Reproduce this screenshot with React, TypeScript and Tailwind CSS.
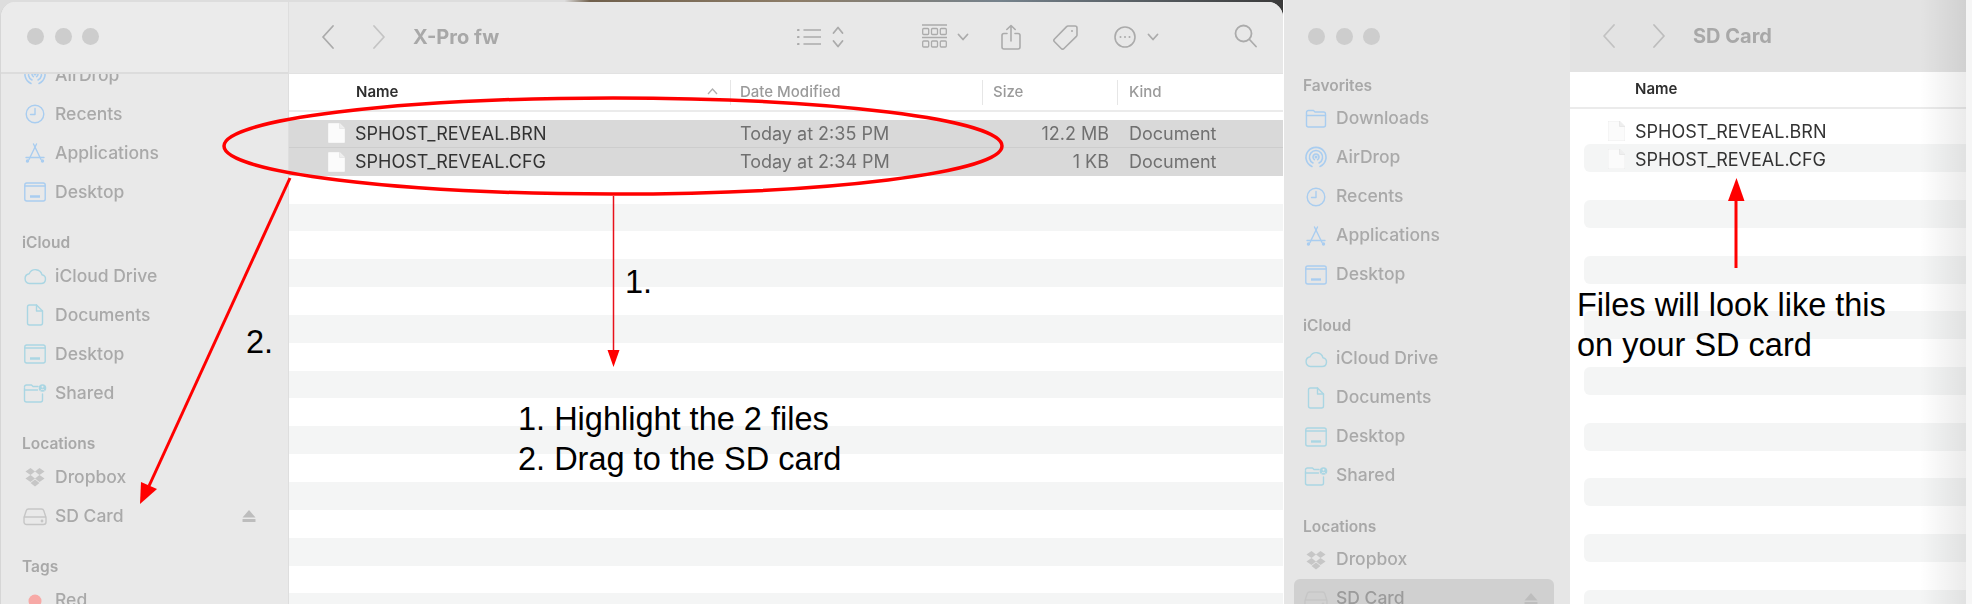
import React from 'react';

type IconName =
  | 'folder' | 'airdrop' | 'clock' | 'apps' | 'desktop'
  | 'cloud' | 'doc' | 'shared' | 'dropbox' | 'drive' | 'dot';

const BLUE = '#a9cdf0';
const TEAL = '#aad6e3';
const GRAY = '#c6c6c6';

const SideIcon = ({ name, color }: { name: IconName; color: string }) => {
  const common = { fill: 'none', stroke: color, strokeWidth: 1.4, strokeLinecap: 'round' as const, strokeLinejoin: 'round' as const };
  return (
    <svg width="24" height="24" viewBox="0 0 24 24" {...common}>
      {name === 'folder' && (
        <>
          <path d="M2.5 7V18a2 2 0 0 0 2 2h15a2 2 0 0 0 2-2V7a2 2 0 0 0-2-2H11L9.5 3.5h-5a2 2 0 0 0-2 2Z" />
          <path d="M2.5 8.5h19" />
        </>
      )}
      {name === 'airdrop' && (
        <>
          <path d="M8 20.5a10 10 0 1 1 8 0" strokeWidth="1.6" />
          <path d="M9 17a6.6 6.6 0 1 1 6 0" strokeWidth="1.6" />
          <path d="M10.4 13.6a3 3 0 1 1 3.2 0" strokeWidth="1.6" />
          <circle cx="12" cy="11" r="0.8" fill={color} />
        </>
      )}
      {name === 'clock' && (
        <>
          <circle cx="12" cy="12" r="8.8" />
          <path d="M12 6.5V12.5H7.5" />
        </>
      )}
      {name === 'apps' && (
        <>
          <path d="M13.5 3 6 18.5" />
          <path d="M10.5 3 18 18.5" />
          <path d="M3 16.5h18" />
          <circle cx="4.5" cy="20" r="1" fill={color} />
          <circle cx="19.5" cy="20" r="1" fill={color} />
        </>
      )}
      {name === 'desktop' && (
        <>
          <rect x="1.8" y="3" width="20.4" height="18" rx="2" />
          <path d="M2 6h20" />
          <path d="M7 16.5h10" strokeWidth="2.4" strokeLinecap="butt" />
        </>
      )}
      {name === 'cloud' && (
        <path d="M6.5 19.5H18a4.4 4.4 0 0 0 1-8.7A6.8 6.8 0 0 0 6.2 9.7a4.95 4.95 0 0 0 .3 9.8Z" />
      )}
      {name === 'doc' && (
        <>
          <path d="M6.5 2h7l6 6v12a2 2 0 0 1-2 2h-11a2 2 0 0 1-2-2V4a2 2 0 0 1 2-2Z" />
          <path d="M13.5 2v6h6" />
        </>
      )}
      {name === 'shared' && (
        <>
          <path d="M1.5 7v12a2 2 0 0 0 2 2h14a2 2 0 0 0 2-2v-6" />
          <path d="M15 5.5h-5L8.5 4h-5a2 2 0 0 0-2 2" />
          <path d="M1.5 9h13" />
          <circle cx="19.5" cy="7" r="3.8" fill={color} stroke="none" />
          <circle cx="19.5" cy="5.8" r="1" fill="#e9e9e9" stroke="none" />
          <path d="M17.8 9c.4-1 3-1 3.4 0" stroke="#e9e9e9" strokeWidth="1" />
        </>
      )}
      {name === 'dropbox' && (
        <g fill={color} stroke="none">
          <path d="M7.5 3l-5 3.5 5 3.5L12 6.5Z" />
          <path d="M16.5 3L12 6.5l4.5 3.5 5-3.5Z" />
          <path d="M2.5 13.5l5-3.5 4.5 3.5L7.5 17Z" />
          <path d="M21.5 13.5l-5-3.5-4.500 3.5 4.500 3.5Z" />
          <path d="M7.5 18l4.500-3.5 4.500 3.5-4.500 3.5Z" />
        </g>
      )}
      {name === 'drive' && (
        <>
          <path d="M5.5 5h13a2.5 2.5 0 0 1 2.3 1.7L23 13.5V18a2.5 2.5 0 0 1-2.5 2.5h-17A2.5 2.5 0 0 1 1 18v-4.5L3.200 6.700A2.500 2.500 0 0 1 5.500 5Z" />
          <path d="M1.5 13h21" />
          <circle cx="19" cy="17" r="0.7" fill={color} />
        </>
      )}
      {name === 'dot' && <circle cx="12" cy="13" r="6.5" fill="#f7a9a6" stroke="none" />}
    </svg>
  );
};

const Eject = () => (
  <svg width="14" height="14" viewBox="0 0 14 14" fill="#bdbdbd">
    <path d="M7 1l6.5 7.5H.5Z" />
    <rect x="0.5" y="10" width="13" height="3" rx="0.5" />
  </svg>
);

type Item = { label: string; icon: IconName; color: string; eject?: boolean; active?: boolean };
type Section = { title?: string; items: Item[] };

const Sidebar = ({ sections }: { sections: Section[] }) => (
  <div className="flex flex-col">
    {sections.map((s, idx) => (
      <div key={idx} className="mb-[18px] flex flex-col">
        {s.title && (
          <div className="flex h-[27px] items-center pl-[9px] text-[15.5px] font-semibold text-[#a8a8a8]">{s.title}</div>
        )}
        {s.items.map((it) => (
          <div
            key={it.label}
            className={`flex h-[39px] items-center rounded-md pl-[10px] pr-[16px] ${it.active ? 'bg-[#d0d0d0] text-[#9b9b9b]' : 'text-[#a9a9a9]'}`}
          >
            <SideIcon name={it.icon} color={it.color} />
            <span className="ml-[8px] text-[17.5px] font-medium">{it.label}</span>
            {it.eject && <span className="ml-auto flex"><Eject /></span>}
          </div>
        ))}
      </div>
    ))}
  </div>
);

const quickItems: Item[] = [
  { label: 'AirDrop', icon: 'airdrop', color: BLUE },
  { label: 'Recents', icon: 'clock', color: BLUE },
  { label: 'Applications', icon: 'apps', color: BLUE },
  { label: 'Desktop', icon: 'desktop', color: BLUE },
];

const icloud: Section = {
  title: 'iCloud',
  items: [
    { label: 'iCloud Drive', icon: 'cloud', color: TEAL },
    { label: 'Documents', icon: 'doc', color: TEAL },
    { label: 'Desktop', icon: 'desktop', color: TEAL },
    { label: 'Shared', icon: 'shared', color: TEAL },
  ],
};

const locations = (active: boolean): Section => ({
  title: 'Locations',
  items: [
    { label: 'Dropbox', icon: 'dropbox', color: GRAY },
    { label: 'SD Card', icon: 'drive', color: GRAY, eject: true, active },
  ],
});

const tags: Section = { title: 'Tags', items: [{ label: 'Red', icon: 'dot', color: '#f7a9a6' }] };

const Traffic = () => (
  <div className="flex gap-[10.5px]">
    <span className="h-[17px] w-[17px] rounded-full bg-[#cdcdcd]" />
    <span className="h-[17px] w-[17px] rounded-full bg-[#cdcdcd]" />
    <span className="h-[17px] w-[17px] rounded-full bg-[#cdcdcd]" />
  </div>
);

const Chevron = ({ dir, color }: { dir: 'left' | 'right'; color: string }) => (
  <svg width="16" height="26" viewBox="0 0 16 26" fill="none" stroke={color} strokeWidth="1.8" strokeLinecap="round" strokeLinejoin="round">
    <path d={dir === 'left' ? 'M13 2 3 13l10 11' : 'M3 2l10 11L3 24'} />
  </svg>
);

const Down = ({ className }: { className: string }) => (
  <svg className={className} width="12" height="8" viewBox="0 0 12 8" fill="none" stroke="#ababab" strokeWidth="1.8" strokeLinecap="round" strokeLinejoin="round">
    <path d="M1.5 1.5 6 6.5l4.5-5" />
  </svg>
);

const ToolIcons = () => (
  <div className="flex items-center pr-[26px]">
    <svg width="24" height="18" viewBox="0 0 24 18" fill="none" stroke="#ababab" strokeWidth="1.5" strokeLinecap="round">
      <path d="M7 2h17M7 9h17M7 16h17" />
      <path d="M1 2h.6M1 9h.6M1 16h.6" strokeWidth="2.2" />
    </svg>
    <svg className="ml-[11px]" width="12" height="24" viewBox="0 0 12 24" fill="none" stroke="#ababab" strokeWidth="1.8" strokeLinecap="round" strokeLinejoin="round">
      <path d="M1.5 8 6 2.5 10.5 8M1.5 16 6 21.5 10.5 16" />
    </svg>
    <svg className="ml-[78px]" width="25" height="25" viewBox="0 0 25 25" fill="none" stroke="#ababab" strokeWidth="1.3">
      <path d="M0 1h25M0 13.5h25" strokeWidth="1.5" />
      <rect x="0.7" y="4.5" width="6" height="6" rx="1" />
      <rect x="9.5" y="4.5" width="6" height="6" rx="1" />
      <rect x="18.3" y="4.5" width="6" height="6" rx="1" />
      <rect x="0.7" y="17" width="6" height="6" rx="1" />
      <rect x="9.5" y="17" width="6" height="6" rx="1" />
      <rect x="18.3" y="17" width="6" height="6" rx="1" />
    </svg>
    <Down className="ml-[10px]" />
    <svg className="ml-[32px]" width="20" height="26" viewBox="0 0 20 26" fill="none" stroke="#ababab" strokeWidth="1.6" strokeLinecap="round" strokeLinejoin="round">
      <path d="M6 9.5H3a2 2 0 0 0-2 2V23a2 2 0 0 0 2 2h14a2 2 0 0 0 2-2V11.5a2 2 0 0 0-2-2h-3" />
      <path d="M10 17V1.5M5.8 5.5 10 1.5l4.2 4" />
    </svg>
    <svg className="ml-[32px]" width="26" height="26" viewBox="0 0 26 26" fill="none" stroke="#ababab" strokeWidth="1.6" strokeLinejoin="round">
      <path d="M15 2h7a2 2 0 0 1 2 2v7a2 2 0 0 1-.6 1.4L11 24.5a2 2 0 0 1-2.8 0l-6.700-6.700a2 2 0 0 1 0-2.800L13.600 2.600A2 2 0 0 1 15 2Z" />
      <circle cx="19" cy="7" r="1" fill="#ababab" stroke="none" />
    </svg>
    <svg className="ml-[35px]" width="22" height="22" viewBox="0 0 22 22" fill="none" stroke="#ababab" strokeWidth="1.6">
      <circle cx="11" cy="11" r="10" />
      <circle cx="6.5" cy="11" r="1" fill="#ababab" stroke="none" />
      <circle cx="11" cy="11" r="1" fill="#ababab" stroke="none" />
      <circle cx="15.5" cy="11" r="1" fill="#ababab" stroke="none" />
    </svg>
    <Down className="ml-[11px]" />
    <svg className="ml-[75px] -mt-[2px]" width="23" height="24" viewBox="0 0 23 24" fill="none" stroke="#ababab" strokeWidth="1.8" strokeLinecap="round">
      <circle cx="9.5" cy="9.5" r="8" />
      <path d="M15.5 15.5 22 22.5" />
    </svg>
  </div>
);

const FileIcon = () => (
  <svg className="shrink-0" width="17" height="20" viewBox="0 0 17 20">
    <path d="M1 0h10.5L17 5.5V19a1 1 0 0 1-1 1H1a1 1 0 0 1-1-1V1a1 1 0 0 1 1-1Z" fill="#fbfbfb" stroke="#e2e2e2" strokeWidth="0.5" />
    <path d="M11.5 0v5.5H17" fill="#eeeeee" stroke="#dddddd" strokeWidth="0.5" />
  </svg>
);

const ROWS = Array.from({ length: 18 }, (_, i) => i);

const files = [
  { name: 'SPHOST_REVEAL.BRN', date: 'Today at 2:35 PM', size: '12.2 MB' },
  { name: 'SPHOST_REVEAL.CFG', date: 'Today at 2:34 PM', size: '1 KB' },
];

const XProWindow = () => (
  <div className="flex h-[604px] w-[1283px] shrink-0 flex-col bg-[linear-gradient(90deg,#dddddd_0%,#dddddd_44%,#70604c_46%,#8d7d68_62%,#75828c_78%,#3a3a3a_100%)] pt-[2px]">
    <div className="flex min-h-0 flex-1 overflow-hidden rounded-t-[15px] border-l border-[#d6d6d6] blur-[0.5px]">
      {/* sidebar is scrolled, AirDrop sits half under the title bar */}
      <div className="flex w-[288px] shrink-0 flex-col overflow-hidden border-r border-[#dedede] bg-[#e9e9e9]">
        <div className="z-10 flex h-[72px] shrink-0 items-center border-b-2 border-[#dcdcdc] bg-[#ebebeb] pb-[2px] pl-[26px]">
          <Traffic />
        </div>
        <div className="ml-[12px] mr-[16px] -mt-[18.5px]">
          <Sidebar sections={[{ items: quickItems }, icloud, locations(false), tags]} />
        </div>
      </div>
      <div className="flex min-w-0 flex-1 flex-col bg-white">
        <div className="flex h-[72px] shrink-0 items-center border-b border-[#e2e2e2] bg-[#e8e8e8] pb-[2px] pl-[31px]">
          <Chevron dir="left" color="#ababab" />
          <span className="ml-[35px] flex"><Chevron dir="right" color="#c4c4c4" /></span>
          <span className="ml-[26px] flex-1 text-[20px] font-bold text-[#a8a8a8]">X-Pro fw</span>
          <ToolIcons />
        </div>
        <div className="flex h-[38px] shrink-0 items-center border-b-2 border-[#ebebeb] text-[15px]">
          <div className="relative w-[441px] pl-[67px] font-semibold text-[#2e2e2e]">
            Name
            <svg className="absolute right-[12px] top-[7px]" width="11" height="7" viewBox="0 0 11 7" fill="none" stroke="#b0b0b0" strokeWidth="1.3"><path d="M1 6 5.5 1 10 6" /></svg>
          </div>
          <div className="flex h-[25px] w-[252px] items-center border-l border-[#e6e6e6] pl-[9px] font-medium text-[#9a9a9a]">Date Modified</div>
          <div className="flex h-[25px] w-[135px] items-center border-l border-[#e6e6e6] pl-[10px] font-medium text-[#9a9a9a]">Size</div>
          <div className="flex h-[25px] items-center border-l border-[#e6e6e6] pl-[11px] font-medium text-[#9a9a9a]">Kind</div>
        </div>
        <div className="mt-[8px] flex flex-col">
          {ROWS.map((i) => {
            const f = files[i];
            if (f) {
              return (
                <div key={i} className={`flex h-[27.85px] shrink-0 items-center bg-[#d9d9d9] text-[18px] ${i === 0 ? 'border-b border-[#cdcdcd]' : ''}`}>
                  <div className="flex w-[441px] items-center gap-[10px] pl-[39px] text-[#333333]">
                    <FileIcon />
                    {f.name}
                  </div>
                  <div className="w-[252px] pl-[10px] text-[#707070]">{f.date}</div>
                  <div className="w-[135px] pr-[8px] text-right text-[#707070]">{f.size}</div>
                  <div className="pl-[12px] text-[#707070]">Document</div>
                </div>
              );
            }
            return <div key={i} className={`h-[27.85px] shrink-0 ${i % 2 === 1 ? 'bg-[#f4f5f5]' : 'bg-white'}`} />;
          })}
        </div>
      </div>
    </div>
  </div>
);

const SdWindow = () => (
  <div className="relative flex h-[604px] w-[682px] shrink-0 overflow-hidden blur-[0.5px]">
    <div className="flex w-[286px] shrink-0 flex-col overflow-hidden bg-[#e6e6e6]">
      <div className="flex h-[72px] shrink-0 items-center pl-[24px]">
        <Traffic />
      </div>
      <div className="ml-[10px] mr-[16px]">
        <Sidebar
          sections={[
            { title: 'Favorites', items: [{ label: 'Downloads', icon: 'folder', color: BLUE }, ...quickItems] },
            icloud,
            locations(true),
          ]}
        />
      </div>
    </div>
    <div className="flex min-w-0 flex-1 flex-col bg-white">
      <div className="flex h-[72px] shrink-0 items-center bg-[#e3e3e3] pl-[31px]">
        <Chevron dir="left" color="#c2c2c2" />
        <span className="ml-[34px] flex"><Chevron dir="right" color="#bdbdbd" /></span>
        <span className="ml-[26px] text-[20px] font-bold text-[#a8a8a8]">SD Card</span>
      </div>
      <div className="flex h-[37px] shrink-0 items-center border-b-2 border-[#ebebeb] pl-[65px] text-[15px] font-semibold text-[#2e2e2e]">Name</div>
      <div className="ml-[14px] mt-[7.5px] flex flex-col">
        {ROWS.map((i) => {
          const name = files[i]?.name;
          return (
            <div key={i} className={`flex h-[27.85px] shrink-0 items-center gap-[10px] rounded-l-md pl-[24px] pt-[2px] text-[18px] text-[#333333] ${i % 2 === 1 ? 'bg-[#f4f5f5]' : 'bg-white'}`}>
              {name && <FileIcon />}
              {name}
            </div>
          );
        })}
      </div>
    </div>
    <div className="absolute inset-y-0 right-0 w-[46px] bg-gradient-to-r from-transparent to-black/[0.08]" />
  </div>
);

export default function App() {
  return (
    <div className="relative flex h-[604px] w-[1972px] overflow-hidden bg-white font-['Inter','Liberation_Sans',sans-serif]">
      <XProWindow />
      <div className="w-px shrink-0 bg-white" />
      <SdWindow />
      <div className="w-[6px] shrink-0 bg-[#f6f6f6]" />

      {/* red annotations over both windows */}
      <svg className="absolute left-0 top-0" width="1972" height="604" viewBox="0 0 1972 604" fill="none">
        <ellipse cx="613" cy="146" rx="389" ry="48" stroke="#ff0000" strokeWidth="3.5" />
        <path d="M613.5 196V352" stroke="#e8101a" strokeWidth="1.5" />
        <path d="M607.5 350h12l-6 17Z" fill="#ff0000" />
        <path d="M290 178 149 486" stroke="#ff0000" strokeWidth="3" />
        <path d="M141 482l16 7-17 15Z" fill="#ff0000" />
        <path d="M1736 200V268" stroke="#ff0000" strokeWidth="3" />
        <path d="M1728 201h16.5L1736.5 178Z" fill="#ff0000" />
      </svg>

      <div className="absolute left-[625px] top-[262px] font-['Liberation_Sans',Arial,sans-serif] text-[32.5px] leading-[40px] text-black">1.</div>
      <div className="absolute left-[246px] top-[322px] font-['Liberation_Sans',Arial,sans-serif] text-[32.5px] leading-[40px] text-black">2.</div>
      <div className="absolute left-[518px] top-[399px] font-['Liberation_Sans',Arial,sans-serif] text-[32.5px] leading-[40px] text-black">
        1. Highlight the 2 files<br />2. Drag to the SD card
      </div>
      <div className="absolute left-[1577px] top-[285px] font-['Liberation_Sans',Arial,sans-serif] text-[32.5px] leading-[40px] text-black">
        Files will look like this<br />on your SD card
      </div>
    </div>
  );
}
